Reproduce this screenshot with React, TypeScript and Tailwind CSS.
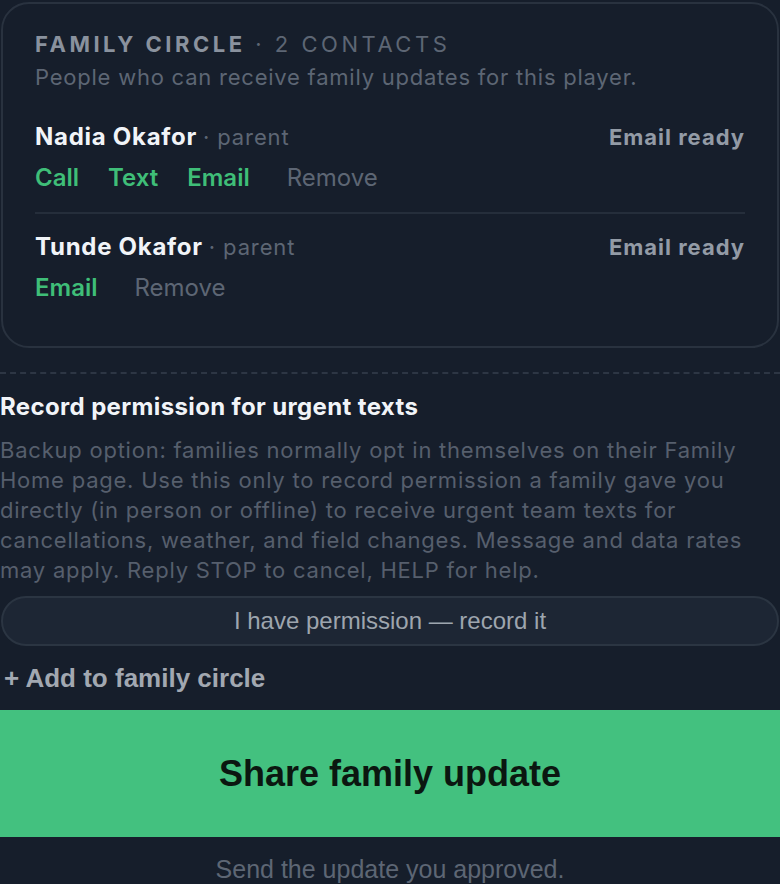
import React from "react";

const inter = { fontFamily: "Inter, 'Noto Sans', sans-serif" };
const arial = { fontFamily: "'Liberation Sans', Arial, sans-serif" };

type Contact = {
  name: string;
  relation: string;
  status: string;
  actions: string[];
};

const contacts: Contact[] = [
  { name: "Nadia Okafor", relation: "parent", status: "Email ready", actions: ["Call", "Text", "Email"] },
  { name: "Tunde Okafor", relation: "parent", status: "Email ready", actions: ["Email"] },
];

function ContactRow({ contact, first }: { contact: Contact; first: boolean }) {
  return (
    <div className={first ? "pb-[18px]" : "pt-[17px] border-t-2 border-[#252e3b]"}>
      <div className="flex h-[32px] items-center justify-between leading-[32px]">
        <div className="flex items-baseline">
          <span className="text-[24px] font-bold tracking-[0.03em] text-[#f1f4f8]">{contact.name}</span>
          <span className="ml-[6px] text-[22px] tracking-[0.04em] text-[#5d6674]">· {contact.relation}</span>
        </div>
        <span className="text-[22px] font-bold tracking-[0.045em] text-[#939ba6]">{contact.status}</span>
      </div>
      <div className="mt-[9px] flex h-[32px] items-center gap-[29px] leading-[32px] text-[24px] font-semibold">
        {contact.actions.map((a) => (
          <button key={a} className="leading-[32px] text-[#3fbe78]">
            {a}
          </button>
        ))}
        <button className="ml-[8px] leading-[32px] font-normal text-[#5d6674]">Remove</button>
      </div>
    </div>
  );
}

export default function App() {
  return (
    <div className="min-h-[884px] w-[780px] bg-[#161e2b] overflow-hidden">
      <div className="pt-[2px]" style={inter}>
        <div className="rounded-[28px] border-2 border-[#29323f] bg-[#161e2b] mx-[1px] px-[32px] pt-[24px] pb-[42px]">
          <div className="leading-[32px] text-[22px] uppercase tracking-[0.16em]">
            <span className="font-bold text-[#8a929e]">Family Circle</span>
            <span className="text-[#5d6674]"> · 2 contacts</span>
          </div>
          <p className="mt-[1px] leading-[32px] text-[22px] tracking-[0.035em] text-[#5d6674]">
            People who can receive family updates for this player.
          </p>
          <div className="mt-[28px]">
            {contacts.map((c, i) => (
              <ContactRow key={c.name} contact={c} first={i === 0} />
            ))}
          </div>
        </div>

        <div className="mt-[24px] border-t-2 border-dashed border-[#2d3644]" />

        <h2 className="mt-[17px] text-[24px] leading-[32px] font-bold tracking-[0.015em] text-[#f1f4f8]">
          Record permission for urgent texts
        </h2>
        <p className="mt-[12px] text-[22px] leading-[30px] tracking-[0.035em] text-[#565f6d]">
          Backup option: families normally opt in themselves on their Family Home page. Use this only to
          record permission a family gave you directly (in person or offline) to receive urgent team texts
          for cancellations, weather, and field changes. Message and data rates may apply. Reply STOP to
          cancel, HELP for help.
        </p>
      </div>

      <div style={arial}>
        <button className="mt-[11px] mx-[1px] flex h-[50px] w-[778px] items-center justify-center rounded-full border-2 border-[#2b3542] bg-[#1d2634] text-[24px] text-[#9ea5ae]">
          I have permission — record it
        </button>
        <button className="mt-[16px] ml-[4px] h-[32px] text-[26px] font-bold leading-[32px] text-[#a2a8b1]">
          + Add to family circle
        </button>
        <button className="mt-[16px] flex h-[127px] w-full items-center justify-center bg-[#43c17f] text-[36px] font-bold text-[#0b1710]">
          Share family update
        </button>
        <p className="mt-[17px] text-center text-[25px] leading-[30px] text-[#5d6674]">
          Send the update you approved.
        </p>
      </div>
    </div>
  );
}
